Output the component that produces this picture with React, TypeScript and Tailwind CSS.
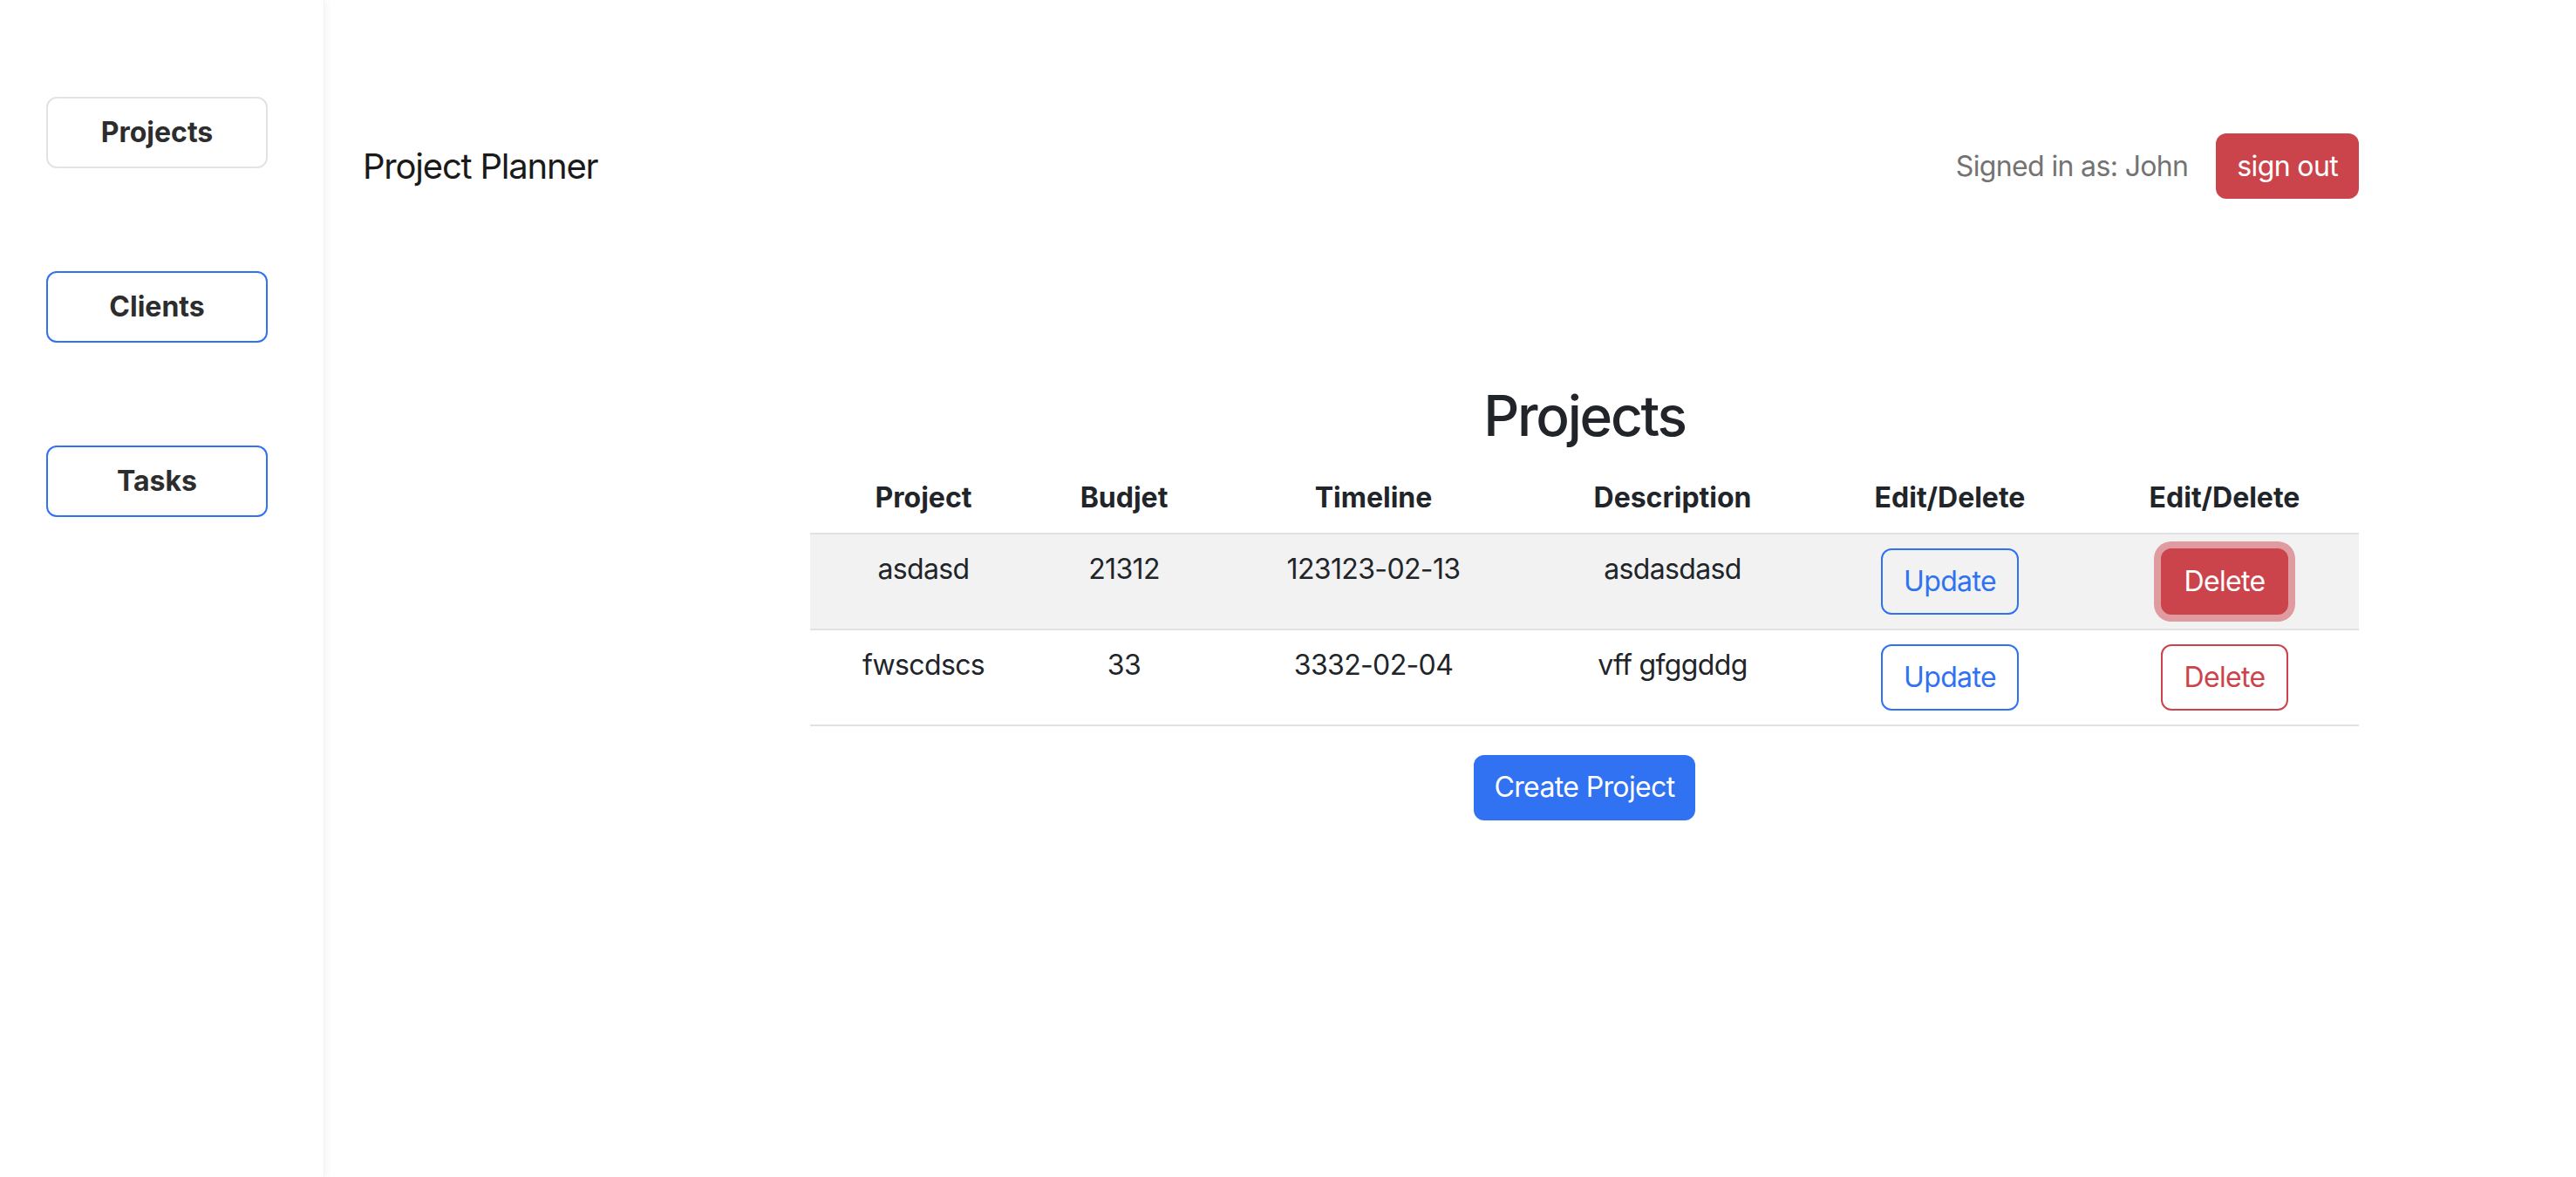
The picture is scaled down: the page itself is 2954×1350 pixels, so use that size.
import React from 'react';

type Project = {
  name: string;
  budget: string;
  timeline: string;
  description: string;
};

const projects: Project[] = [
  { name: 'asdasd', budget: '21312', timeline: '123123-02-13', description: 'asdasdasd' },
  { name: 'fwscdscs', budget: '33', timeline: '3332-02-04', description: 'vff gfggddg' },
];

const SideButton = ({ label, active }: { label: string; active?: boolean }) => (
  <button
    className={`w-[254px] h-[82px] rounded-[12px] border-2 bg-white text-[32px] font-bold text-[#2d2d2d] ${
      active ? 'border-[#e2e3e7]' : 'border-[#3072f1]'
    }`}
  >
    {label}
  </button>
);

const cell = 'p-[16px] text-center align-top text-[32px] leading-[48px] tracking-[-0.02em]';

const App: React.FC = () => {
  return (
    <div className="flex h-[1350px] w-full bg-white font-['Inter',sans-serif] text-[#212529]">
      <aside className="relative z-10 flex w-[372px] shrink-0 flex-col items-start gap-[118px] border-r border-[#f3f3f3] pl-[53px] pt-[111px] shadow-[4px_0_6px_rgba(0,0,0,0.03)]">
        <SideButton label="Projects" active />
        <SideButton label="Clients" />
        <SideButton label="Tasks" />
      </aside>

      <main className="flex flex-1 flex-col pl-[44px] pr-[249px]">
        <nav className="mt-[153px] flex h-[75px] items-center justify-between">
          <span className="text-[40px] tracking-[-0.03em] text-[#1a1a1a]">Project Planner</span>
          <div className="flex items-center gap-[32px]">
            <span className="text-[32px] tracking-[-0.02em] text-[#737373]">Signed in as: John</span>
            <button className="h-[75px] rounded-[12px] bg-[#cc444b] px-[24px] text-[32px] tracking-[-0.02em] text-white">
              sign out
            </button>
          </div>
        </nav>

        <section className="ml-auto mt-[211px] w-[1776px]">
          <h2 className="mb-[15px] text-center text-[64px] font-medium leading-[1.2] tracking-[-0.035em]">Projects</h2>
          <table className="w-full table-fixed border-collapse">
            <colgroup>
              <col className="w-[260px]" />
              <col className="w-[200px]" />
              <col className="w-[372px]" />
              <col className="w-[314px]" />
              <col className="w-[322px]" />
              <col className="w-[308px]" />
            </colgroup>
            <thead>
              <tr className="border-b-2 border-[#dee2e6]">
                {['Project', 'Budjet', 'Timeline', 'Description', 'Edit/Delete', 'Edit/Delete'].map((h, i) => (
                  <th key={i} className="p-[16px] text-center text-[32px] font-bold leading-[48px]">
                    {h}
                  </th>
                ))}
              </tr>
            </thead>
            <tbody>
              {projects.map((p, i) => (
                <tr key={p.name} className={`border-b-2 border-[#dee2e6] ${i === 0 ? 'bg-[#f2f2f2]' : 'bg-white'}`}>
                  <td className={cell}>{p.name}</td>
                  <td className={cell}>{p.budget}</td>
                  <td className={cell}>{p.timeline}</td>
                  <td className={cell}>{p.description}</td>
                  <td className={cell}>
                    <button className="inline-flex h-[76px] items-center rounded-[12px] border-2 border-[#3072f1] px-[24px] align-top text-[32px] text-[#3072f1]">
                      Update
                    </button>
                  </td>
                  <td className={cell}>
                    {i === 0 ? (
                      <button className="inline-flex h-[76px] items-center rounded-[12px] border-2 border-[#cc444b] bg-[#cc444b] px-[24px] align-top text-[32px] text-white shadow-[0_0_0_8px_rgba(204,68,75,0.5)]">
                        Delete
                      </button>
                    ) : (
                      <button className="inline-flex h-[76px] items-center rounded-[12px] border-2 border-[#cc444b] px-[24px] align-top text-[32px] text-[#cc444b]">
                        Delete
                      </button>
                    )}
                  </td>
                </tr>
              ))}
            </tbody>
          </table>
          <div className="mt-[33px] flex justify-center">
            <button className="h-[75px] rounded-[12px] bg-[#3072f1] px-[24px] text-[32px] tracking-[-0.02em] text-white">
              Create Project
            </button>
          </div>
        </section>
      </main>
    </div>
  );
};

export default App;
